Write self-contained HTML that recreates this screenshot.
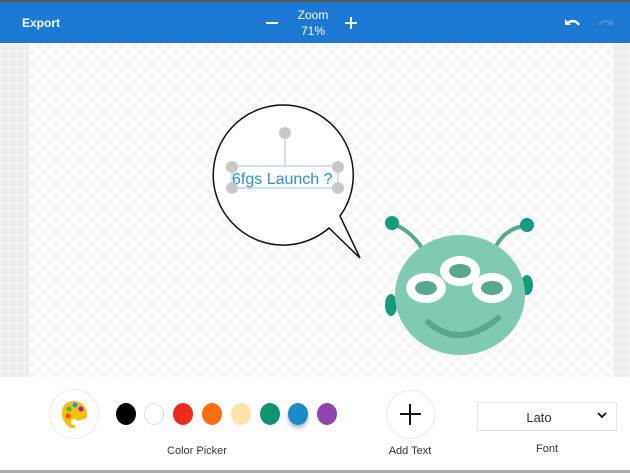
<!DOCTYPE html>
<html><head><style>
*{margin:0;padding:0;box-sizing:border-box}
body{width:630px;height:473px;overflow:hidden;font-family:"Liberation Sans",sans-serif;background:#fff;position:relative}
.top{position:absolute;left:0;top:0;width:630px;height:2px;background:#555}
.bar{position:absolute;left:0;top:2px;width:630px;height:41px;background:#1b78d3;color:#fff}
.side{position:absolute;top:43px;height:334px;background-color:#ececec;background-image:linear-gradient(#f6f6f6 1px,transparent 1px),linear-gradient(90deg,#f6f6f6 1px,transparent 1px);background-size:8px 8px}
.canvas{position:absolute;left:29px;top:43px;width:584px;height:334px;background-color:#fff;background-image:repeating-conic-gradient(#f5f5f5 0 25%,#fff 0 50%);background-size:12px 12px}
.lbl{position:absolute;font-size:11px;color:#333;transform:translateX(-50%)}
.sw{position:absolute;width:20px;height:22px;border-radius:50%;top:403px}
</style></head><body>
<div class="top"></div>
<div class="bar">
 <div style="position:absolute;left:22px;top:14px;font-size:12px;font-weight:bold">Export</div>
 <div style="position:absolute;left:266px;top:20px;width:12px;height:2px;background:#fff"></div>
 <div style="position:absolute;left:296px;top:5px;font-size:12px;text-align:center;width:34px;line-height:16px">Zoom<br>71%</div>
 <div style="position:absolute;left:345px;top:20px;width:12px;height:2px;background:#fff"></div>
 <div style="position:absolute;left:350px;top:15px;width:2px;height:12px;background:#fff"></div>
 <svg style="position:absolute;left:562px;top:14px" width="20" height="14" viewBox="0 0 20 14"><path d="M3 3v6h6" fill="#fff"/><path d="M5 8c3-4 9-4 12 1" stroke="#fff" stroke-width="2.4" fill="none"/></svg>
 <svg style="position:absolute;left:596px;top:14px" width="20" height="14" viewBox="0 0 20 14"><path d="M17 3v6h-6" fill="#4a8fd6"/><path d="M15 8c-3-4-9-4-12 1" stroke="#4a8fd6" stroke-width="2.4" fill="none"/></svg>
</div>
<div class="side" style="left:0;width:29px"></div>
<div class="side" style="left:613px;width:17px"></div>
<div class="canvas"></div>
<svg style="position:absolute;left:0;top:0" width="630" height="377">
 <path d="M340 216 A70 70 0 1 0 329 228 L360 258 Z" fill="#fff" stroke="#111" stroke-width="1.5" stroke-linejoin="miter"/>
 <line x1="285" y1="133" x2="285" y2="166" stroke="#9cc3f0"/>
 <rect x="232" y="166" width="106" height="22" fill="none" stroke="#9cc3f0"/>
 <text x="232" y="184" font-family="Liberation Sans" font-size="16" fill="#2f8fc9">6fgs Launch ?</text>
 <g fill="#c8c8c8"><circle cx="285" cy="133" r="6"/><circle cx="232" cy="167" r="6"/><circle cx="338" cy="167" r="6"/><circle cx="232" cy="188" r="6"/><circle cx="338" cy="188" r="6"/></g>
 <path d="M393 224 Q410 230 422 248" stroke="#5aa690" stroke-width="4" fill="none"/>
 <path d="M525 226 Q505 228 495 248" stroke="#5aa690" stroke-width="4" fill="none"/>
 <circle cx="392" cy="223" r="7" fill="#159a7c"/><circle cx="527" cy="225" r="7" fill="#159a7c"/>
 <ellipse cx="391" cy="305" rx="6" ry="11" fill="#159a7c"/><ellipse cx="527" cy="285" rx="6" ry="10" fill="#159a7c"/>
 <ellipse cx="460" cy="295" rx="65" ry="60" fill="#80cab5"/>
 <g fill="#fff"><ellipse cx="460" cy="271" rx="20" ry="15"/><ellipse cx="426" cy="288" rx="20" ry="15"/><ellipse cx="492" cy="288" rx="20" ry="15"/></g>
 <g fill="#5aa690"><ellipse cx="460" cy="271" rx="11" ry="7"/><ellipse cx="426" cy="288" rx="11" ry="7"/><ellipse cx="492" cy="288" rx="11" ry="7"/></g>
 <path d="M428 322 Q460 350 498 318" stroke="#5aa690" stroke-width="6" fill="none" stroke-linecap="round"/>
</svg>
<div style="position:absolute;left:0;top:470px;width:630px;height:3px;background:#aaa"></div>
<div style="position:absolute;left:49px;top:389px;width:50px;height:50px;border-radius:50%;border:1px solid #e8e8e8"></div>
<svg style="position:absolute;left:59px;top:399px" width="30" height="32" viewBox="0 0 30 32"><path d="M15 2C6 2 2 9 3 16c1 7 7 14 12 13 3-1 0-5 3-7 3-2 9 0 10-5 1-8-5-15-13-15z" fill="#f9bd0c"/><circle cx="10" cy="10" r="2.5" fill="#4caf50"/><circle cx="16" cy="6" r="2.5" fill="#2196f3"/><circle cx="22" cy="10" r="2.5" fill="#8e24aa"/><circle cx="9" cy="17" r="2.5" fill="#f4511e"/><circle cx="15" cy="23" r="3" fill="#fff"/></svg>
<div class="sw" style="left:116px;background:#000"></div>
<div class="sw" style="left:144px;background:#fff;border:1px solid #ddd"></div>
<div class="sw" style="left:173px;background:#ee2a1b"></div>
<div class="sw" style="left:202px;background:#fb6d13"></div>
<div class="sw" style="left:231px;background:#fbe2ac"></div>
<div class="sw" style="left:260px;background:#139173"></div>
<div class="sw" style="left:288px;background:#1c8ac8;box-shadow:0 3px 4px rgba(0,0,0,.3)"></div>
<div class="sw" style="left:317px;background:#8e44ad"></div>
<div class="lbl" style="left:197px;top:445px">Color Picker</div>
<div style="position:absolute;left:386px;top:390px;width:49px;height:49px;border-radius:50%;border:1px solid #e8e8e8"></div>
<div style="position:absolute;left:400px;top:413px;width:21px;height:2px;background:#111"></div>
<div style="position:absolute;left:409px;top:404px;width:2px;height:21px;background:#111"></div>
<div class="lbl" style="left:410px;top:445px">Add Text</div>
<div style="position:absolute;left:477px;top:402px;width:140px;height:29px;border:1px solid #e4e4e4"></div>
<div class="lbl" style="left:539px;top:410px;font-size:13px">Lato</div>
<svg style="position:absolute;left:597px;top:412px" width="10" height="7"><path d="M1 1l4 4 4-4" stroke="#111" stroke-width="1.8" fill="none"/></svg>
<div class="lbl" style="left:547px;top:443px">Font</div>
</body></html>
